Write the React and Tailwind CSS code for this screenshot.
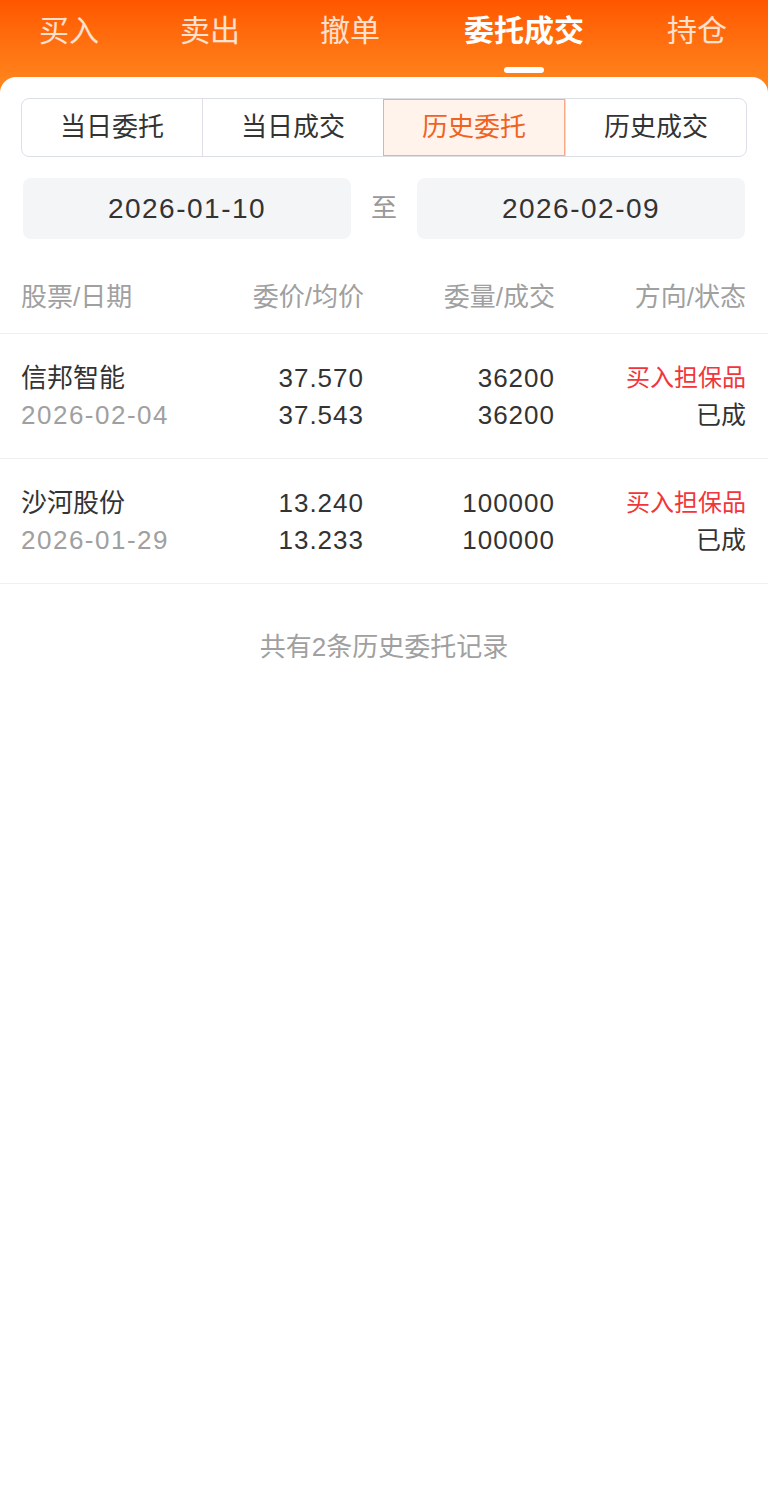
import { useState } from 'react'

const topTabs = [
  { label: '买入', w: 'w-[138px]' },
  { label: '卖出', w: 'w-[144px]' },
  { label: '撤单', w: 'w-[136px]' },
  { label: '委托成交', w: 'w-[212px]' },
  { label: '持仓', w: 'w-[134px]' },
]
const subTabs = ['当日委托', '当日成交', '历史委托', '历史成交']

const orders = [
  { name: '信邦智能', date: '2026-02-04', price: '37.570', avg: '37.543', qty: '36200', done: '36200', side: '买入担保品', status: '已成' },
  { name: '沙河股份', date: '2026-01-29', price: '13.240', avg: '13.233', qty: '100000', done: '100000', side: '买入担保品', status: '已成' },
]

const App = () => {
  const [tab, setTab] = useState(3)
  const [sub, setSub] = useState(2)

  return (
    <div
      className="min-h-[1486px] bg-white"
      style={{ fontFamily: '"Liberation Sans", "Noto Sans CJK SC", sans-serif' }}
    >
      <div className="h-[95px] bg-gradient-to-b from-[#ff5600] to-[#ff8a1e]">
        <div className="flex">
          {topTabs.map((t, i) => (
            <button
              key={t.label}
              onClick={() => setTab(i)}
              className={`flex flex-col items-center pt-[12px] text-[30px] leading-[38px] ${t.w} ${
                tab === i ? 'font-semibold text-white' : 'text-white/80'
              }`}
            >
              {t.label}
              {tab === i && <span className="mt-[17px] h-[6px] w-[40px] rounded-full bg-white" />}
            </button>
          ))}
        </div>
      </div>

      <div className="relative -mt-[18px] rounded-t-[16px] bg-white">
        <div className="px-[21px] pt-[21px]">
          <div className="flex h-[59px] overflow-hidden rounded-[8px] border border-[#dcdfe6]">
            {subTabs.map((s, i) => (
              <button
                key={s}
                onClick={() => setSub(i)}
                className={`flex-1 text-[26px] ${i > 0 ? 'border-l' : ''} ${
                  sub === i
                    ? 'border border-[#f8ab86] bg-[#fff3ec] text-[#f0631f]'
                    : 'border-[#dcdfe6] text-[#333]'
                }`}
              >
                {s}
              </button>
            ))}
          </div>
        </div>

        <div className="mt-[21px] flex items-center px-[23px]">
          <div className="flex h-[61px] flex-1 items-center justify-center rounded-[8px] bg-[#f4f5f7] text-[28px] tracking-[1.5px] text-[#333]">
            2026-01-10
          </div>
          <div className="w-[66px] text-center text-[26px] text-[#999]">至</div>
          <div className="flex h-[61px] flex-1 items-center justify-center rounded-[8px] bg-[#f4f5f7] text-[28px] tracking-[1.5px] text-[#333]">
            2026-02-09
          </div>
        </div>

        <div className="mt-[22px] grid h-[73px] grid-cols-[1fr_191px_191px_191px] items-center border-b border-[#f0f0f0] pl-[21px] pr-[22px] text-[26px] text-[#a0a0a0]">
          <div>股票/日期</div>
          <div className="text-right">委价/均价</div>
          <div className="text-right">委量/成交</div>
          <div className="text-right">方向/状态</div>
        </div>

        {orders.map((o) => (
          <div
            key={o.name}
            className="grid h-[125px] grid-cols-[1fr_191px_191px_191px] content-center gap-y-[5px] border-b border-[#f0f0f0] pl-[21px] pr-[22px] text-[26px] leading-[32px] text-[#333]"
          >
            <div>{o.name}</div>
            <div className="text-right tracking-[1px]">{o.price}</div>
            <div className="text-right tracking-[1px]">{o.qty}</div>
            <div className="text-right text-[24px] text-[#f2353a]">{o.side}</div>
            <div className="tracking-[1.5px] text-[#a0a0a0]">{o.date}</div>
            <div className="text-right tracking-[1px]">{o.avg}</div>
            <div className="text-right tracking-[1px]">{o.done}</div>
            <div className="text-right text-[25px]">{o.status}</div>
          </div>
        ))}

        <div className="pt-[44px] text-center text-[26px] text-[#a0a0a0]">共有2条历史委托记录</div>
      </div>
    </div>
  )
}

export default App
